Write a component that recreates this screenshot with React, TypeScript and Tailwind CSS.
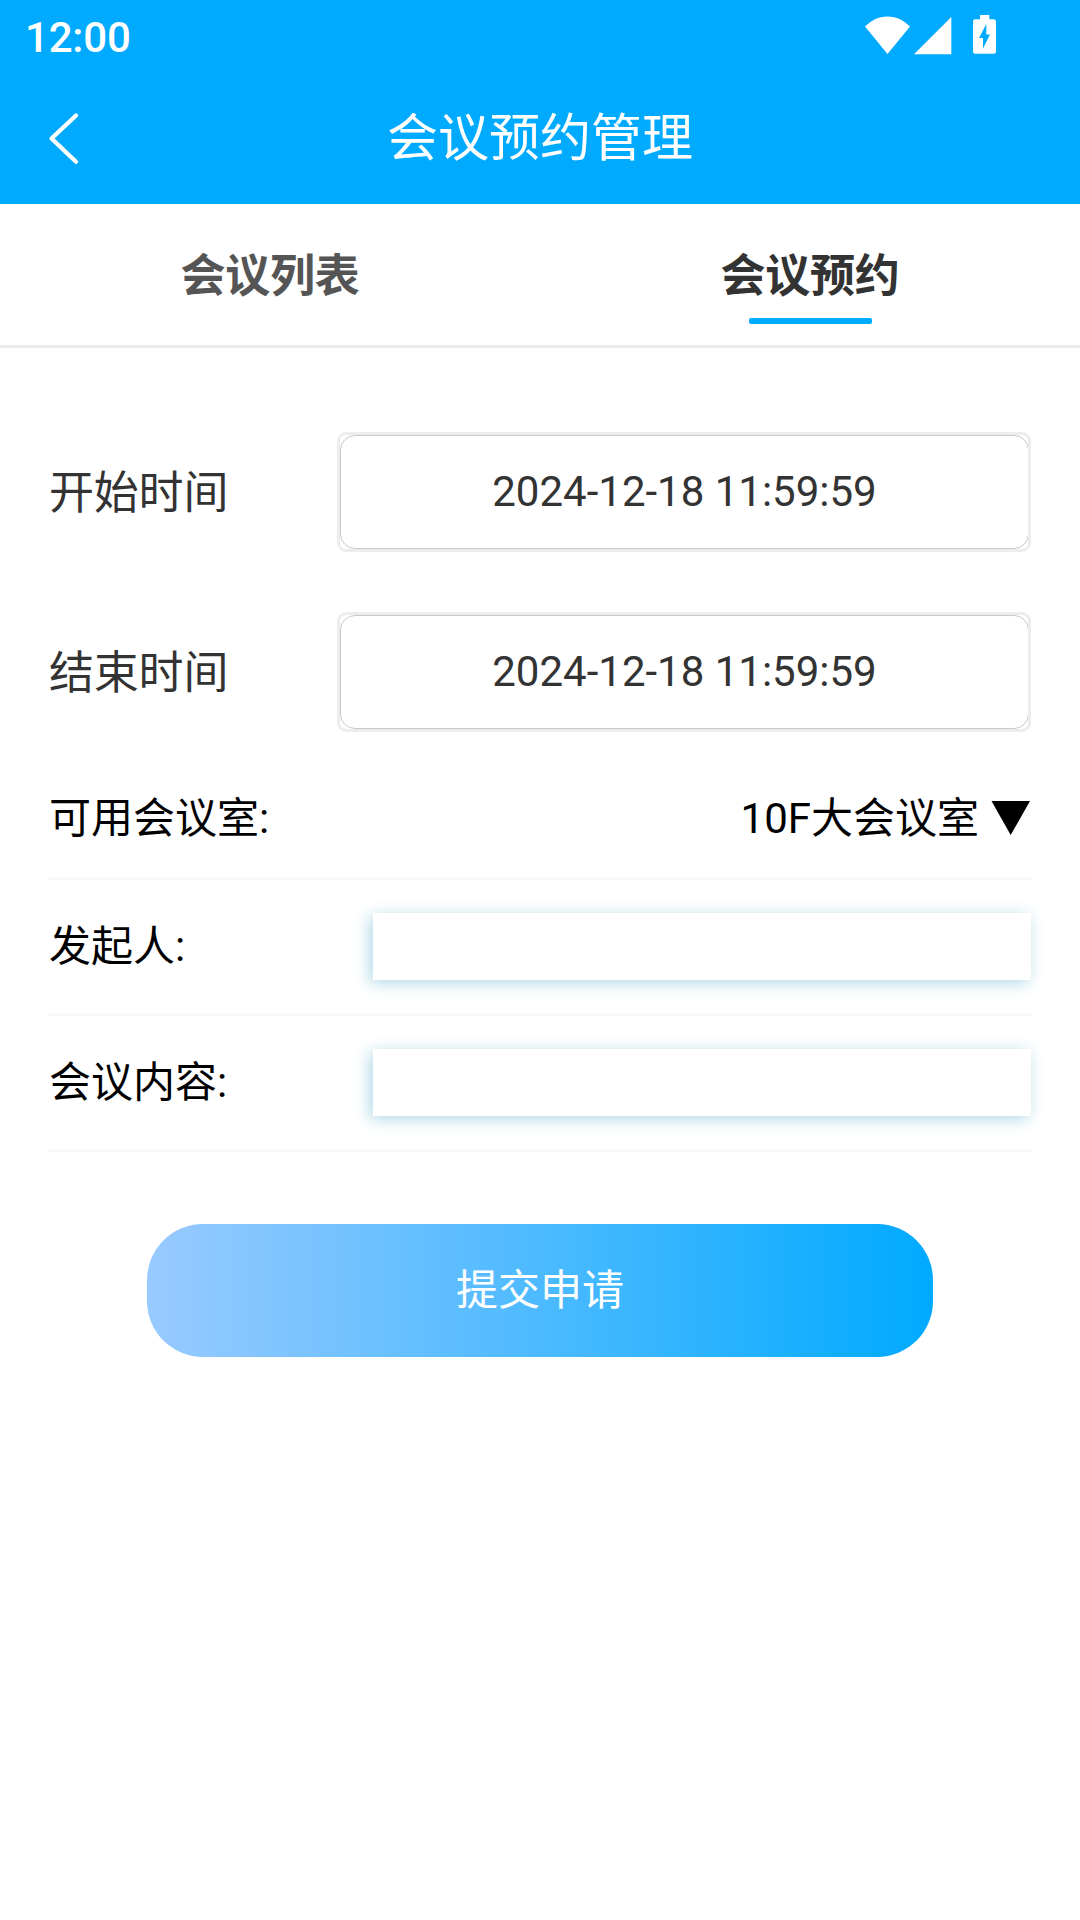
import { useState } from 'react';

interface TimeRowProps {
  label: string;
  value: string;
}

interface InputRowProps {
  label: string;
  value: string;
  onChange: (value: string) => void;
}

const TABS = ['会议列表', '会议预约'];

function StatusBar() {
  return (
    <div className="flex h-[72px] items-center justify-between pl-[25px] pr-[84px]">
      <span className="pt-[3px] text-[42px] font-medium leading-[74px] tracking-[-0.2px]">12:00</span>
      <svg className="h-[72px] w-[131px]" viewBox="865 0 131 72" fill="currentColor">
        {/* wifi */}
        <path d="M887.5 54 865 26.6C871 20.5 878.500 16.500 887.500 16.500S904 20.500 910 26.600Z" />
        {/* signal */}
        <path d="M914 54.300H951.300V17Z" />
        {/* battery */}
        <path
          fillRule="evenodd"
          d="M980 15h9.300v4.300h4.200a2.500 2.500 0 0 1 2.500 2.500v29.500a2.500 2.500 0 0 1-2.500 2.500h-18a2.500 2.500 0 0 1-2.500-2.500v-29.500a2.500 2.500 0 0 1 2.500-2.500h4.500ZM986.300 24 979 38h4v10.500l7-14h-3.700Z"
        />
      </svg>
    </div>
  );
}

function TimeRow({ label, value }: TimeRowProps) {
  return (
    <div className="flex h-[120px] items-center justify-between">
      <span className="pt-[4px] text-[45px] tracking-[-0.2px] text-[#333333]">{label}</span>
      <div className="h-[120px] w-[694px] overflow-hidden rounded-[9px] border-[3px] border-[#ebedf0]">
        <button className="flex h-full w-[689px] items-center justify-center rounded-[15px] border border-[#c8c8c8] pb-[2px] text-[42px] text-[#333333]">
          {value}
        </button>
      </div>
    </div>
  );
}

function InputRow({ label, value, onChange }: InputRowProps) {
  return (
    <label className="flex h-[136px] items-center justify-between border-b-[3px] border-[#f8f8f8]">
      <span className="text-[42px]">{label}</span>
      <input
        className="h-[67px] w-[658px] bg-white px-3 text-[42px] shadow-[-3px_3px_15px_#add8e6] outline-none"
        value={value}
        onChange={e => onChange(e.target.value)}
      />
    </label>
  );
}

export default function App() {
  const [activeTab, setActiveTab] = useState(1);
  const [initiator, setInitiator] = useState('');
  const [content, setContent] = useState('');

  return (
    <div className="min-h-[1920px] w-[1080px] bg-white font-[Roboto,'Noto_Sans_CJK_SC',sans-serif] text-black">
      <header className="h-[204px] bg-[#00aaff] text-white">
        <StatusBar />
        <div className="grid h-[132px] grid-cols-[120px_1fr_120px] items-center">
          <button className="pl-[46px]">
            <svg className="h-[56px] w-[36px]" viewBox="46 110 36 56" fill="none" stroke="currentColor">
              <path d="M76 115.500 51.500 138.500 76 161.700" strokeWidth={4.3} strokeLinecap="round" strokeLinejoin="round" />
            </svg>
          </button>
          <h1 className="pt-[3px] text-center text-[51px]">会议预约管理</h1>
        </div>
      </header>

      {/* Tabs */}
      <nav className="flex h-[144px] border-b-[3px] border-[#ebebeb]">
        {TABS.map((tab, index) => (
          <button
            key={tab}
            onClick={() => setActiveTab(index)}
            className={`flex flex-1 flex-col items-center pt-[40px] text-[45px] font-bold leading-[66px] tracking-[-0.2px] ${
              index === activeTab ? 'text-[#333333]' : 'text-[#555555]'
            }`}
          >
            {tab}
            {index === activeTab && <span className="mt-[8px] h-[6px] w-[123px] rounded-[2px] bg-[#00aaff]" />}
          </button>
        ))}
      </nav>

      <main className="px-[49px] pt-[84px]">
        <div className="flex flex-col gap-[60px]">
          <TimeRow label="开始时间" value="2024-12-18 11:59:59" />
          <TimeRow label="结束时间" value="2024-12-18 11:59:59" />
        </div>

        {/* Room picker */}
        <div className="mt-[28px] flex h-[120px] items-center justify-between border-b-[3px] border-[#f8f8f8] text-[42px]">
          <span>可用会议室:</span>
          <button className="flex items-center gap-[12px]">
            10F大会议室
            <svg className="mb-[1px] h-[34px] w-[40px]" viewBox="0 0 40 34" fill="currentColor">
              <path d="M0.500 0H39L19.700 34Z" />
            </svg>
          </button>
        </div>
        <InputRow label="发起人:" value={initiator} onChange={setInitiator} />
        <InputRow label="会议内容:" value={content} onChange={setContent} />

        <button className="mx-auto mt-[72px] flex h-[133px] w-[786px] items-center justify-center rounded-[56px] bg-[linear-gradient(to_right,#99caff,#00aaff)] text-[42px] text-white">
          提交申请
        </button>
      </main>
    </div>
  );
}
